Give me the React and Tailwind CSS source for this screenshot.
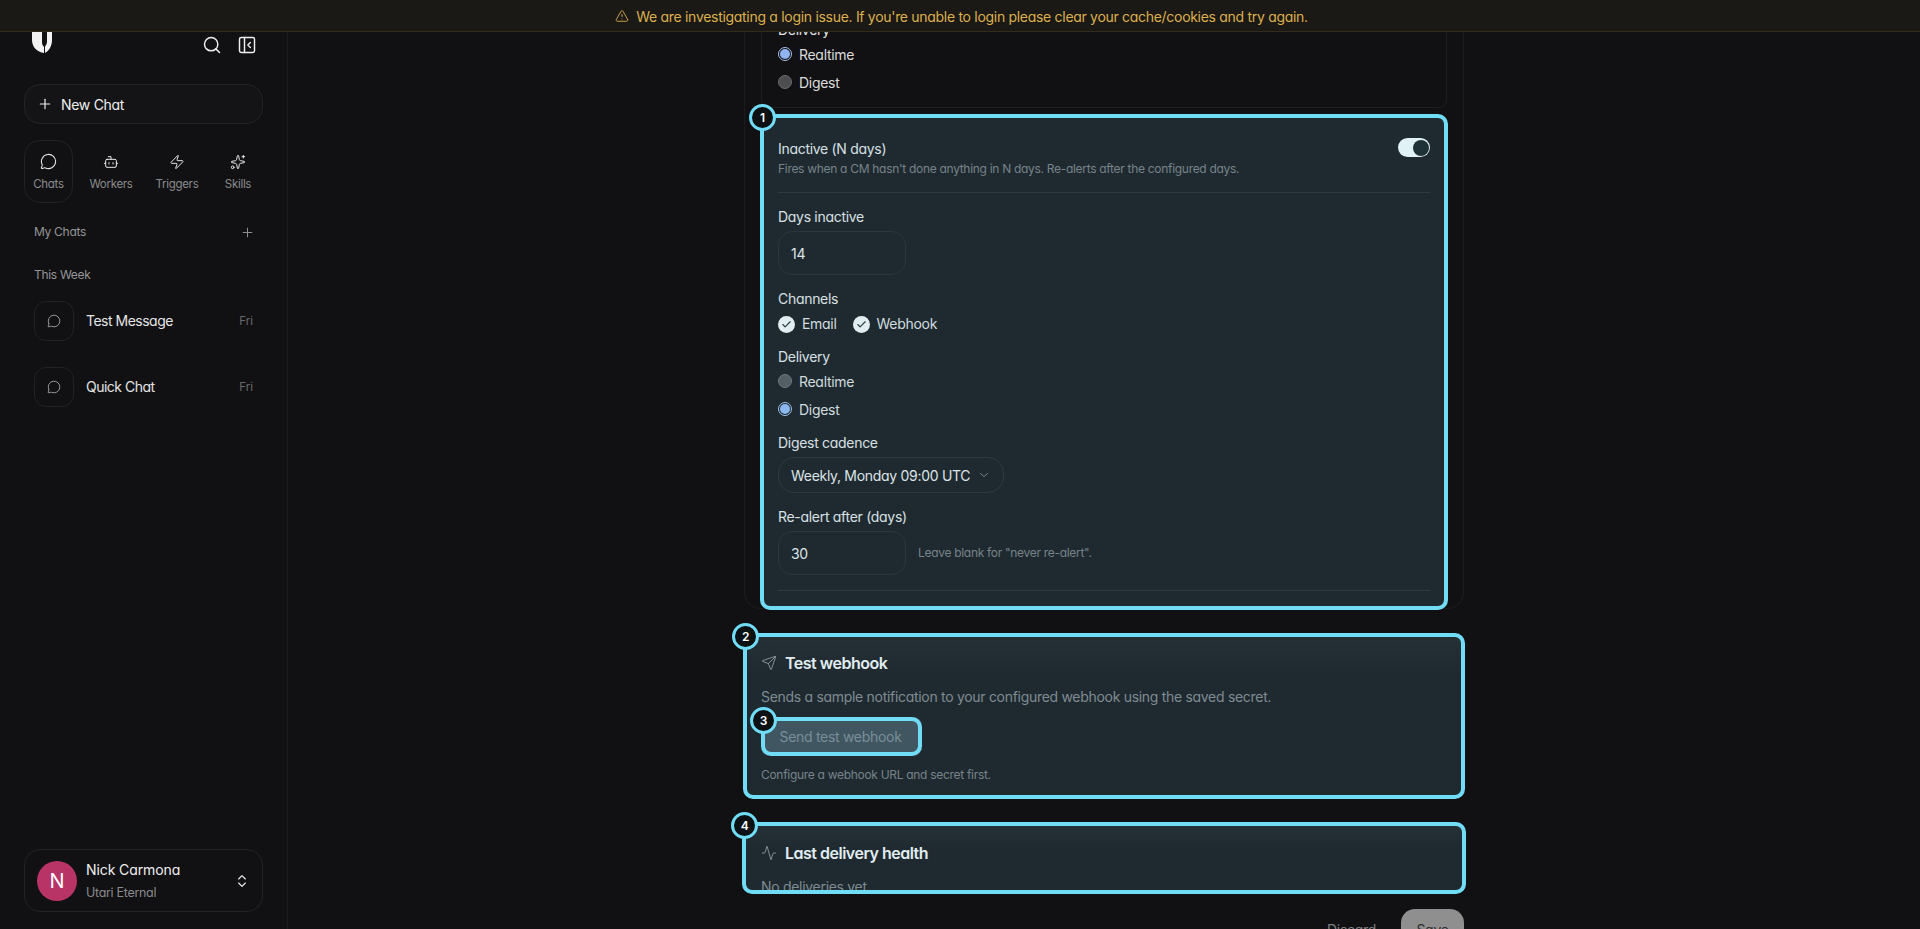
import {
  Activity,
  Bot,
  Check,
  ChevronDown,
  ChevronsUpDown,
  MessageCircle,
  PanelLeftClose,
  Plus,
  Search,
  Send,
  Sparkles,
  TriangleAlert,
  Zap,
} from "lucide-react";

function Logo() {
  return (
    <svg width="20" height="21" viewBox="0 0 20 21" fill="#f2f2f2">
      <path d="M0 0H10V10C10 12 10.5 13.5 12 15V21C5 20 0 15 0 8Z" />
      <path d="M15 0H20V8C20 14 17 19 13 21V14.5C14.5 13 15 11 15 9Z" />
    </svg>
  );
}

function Tab({ icon: Icon, label, size = 17, className }) {
  return (
    <div className={`flex h-[63px] flex-col items-center rounded-[16px] border pt-[12px] ${className}`}>
      <div className="flex h-[17px] items-center">
        <Icon size={size} strokeWidth={1.5} className="text-[#e6e6e6]" />
      </div>
      <span className="mt-[6px] text-[11.5px] leading-[16px] text-[#8b8b8d]">{label}</span>
    </div>
  );
}

function ChatRow({ title }) {
  return (
    <div className="flex h-[40px] items-center pl-[34px] pr-[34px]">
      <div className="flex h-[40px] w-[40px] items-center justify-center rounded-[12px] border border-[#222225]">
        <MessageCircle size={14} strokeWidth={1.5} className="text-[#a8a8a8]" />
      </div>
      <span className="ml-[12px] flex-1 text-[14px] leading-[20px] tracking-[-0.5px] text-[#e4e4e4]">{title}</span>
      <span className="text-[11.5px] leading-[16px] tracking-normal text-[#6a6a6c]">Fri</span>
    </div>
  );
}

function Sidebar() {
  return (
    <aside className="flex w-[288px] shrink-0 flex-col border-r border-[#1b1b1e] bg-[#111113]">
      <div className="flex h-[52px] items-start justify-between overflow-hidden pl-[32px] pr-[30px]">
        <Logo />
        <div className="mt-[3px] flex items-center gap-[15px]">
          <Search size={20} strokeWidth={1.75} className="text-[#efefef]" />
          <PanelLeftClose size={20} strokeWidth={1.75} className="text-[#efefef]" />
        </div>
      </div>
      <div className="mx-[24px] flex h-[40px] items-center rounded-[16px] border border-[#242427] bg-[#141416] pl-[12px]">
        <Plus size={16} strokeWidth={1.75} className="text-[#eeeeee]" />
        <span className="ml-[8px] pt-[1px] text-[14px] leading-[20px] text-[#eeeeee]">New Chat</span>
      </div>
      <div className="ml-[24px] mt-[16px] flex">
        <Tab icon={MessageCircle} label="Chats" className="w-[49px] border-[#222225]" />
        <Tab icon={Bot} size={16} label="Workers" className="ml-[7px] w-[62px] border-transparent" />
        <Tab icon={Zap} size={16} label="Triggers" className="ml-[4px] w-[62px] border-transparent" />
        <Tab icon={Sparkles} size={16} label="Skills" className="ml-[4px] w-[52px] border-transparent" />
      </div>
      <div className="mt-[21px] flex h-[16px] items-center justify-between pl-[34px] pr-[32px]">
        <span className="text-[12px] leading-[16px] text-[#959597]">My Chats</span>
        <Plus size={15} strokeWidth={1.5} className="text-[#959597]" />
      </div>
      <div className="mt-[27px] pl-[34px] text-[12px] leading-[16px] text-[#959597]">This Week</div>
      <div className="mt-[18px] flex flex-col gap-[26px]">
        <ChatRow title="Test Message" />
        <ChatRow title="Quick Chat" />
      </div>
      <div className="mx-[24px] mb-[17px] mt-auto flex h-[63px] items-center rounded-[16px] border border-[#232326] pl-[12px] pr-[12px]">
        <div className="flex h-[40px] w-[40px] items-center justify-center rounded-full bg-[#b83366] text-[20px] text-white">N</div>
        <div className="ml-[9px] flex-1">
          <div className="text-[14px] leading-[20px] tracking-[-0.1px] text-[#f0f0f0]">Nick Carmona</div>
          <div className="mt-[5px] text-[12.5px] leading-[16px] text-[#8a8a8c]">Utari Eternal</div>
        </div>
        <ChevronsUpDown size={16} strokeWidth={1.75} className="text-[#eeeeee]" />
      </div>
    </aside>
  );
}

function Marker({ n, inset = "-inset-[2px]" }) {
  return (
    <div className={`pointer-events-none absolute ${inset} z-10 rounded-[10px] border-4 border-[#70dcf6] bg-[#78dcf5]/[0.13]`}>
      <div className="absolute -left-[15px] -top-[14px] flex h-[27px] w-[27px] items-center justify-center rounded-full border-[3px] border-[#70dcf6] bg-[#0c1114] text-[12px] font-semibold text-white">
        {n}
      </div>
    </div>
  );
}

function Label({ children, className = "" }) {
  return <div className={`text-[14px] leading-[20px] text-[#e2e2e2] ${className}`}>{children}</div>;
}

function Radio({ on, label, className = "" }) {
  return (
    <div className={`flex h-[20px] items-center ${className}`}>
      {on ? (
        <span className="-mt-[2px] flex h-[14px] w-[14px] items-center justify-center rounded-full border-[1.5px] border-[#a8c0ea] bg-[#111113]">
          <span className="h-[10px] w-[10px] rounded-full bg-[#8fb4f0]" />
        </span>
      ) : (
        <span className="-mt-[2px] h-[14px] w-[14px] rounded-full border border-[#6b6b6b] bg-[#4d4d4f]" />
      )}
      <span className="ml-[7px] text-[14px] leading-[20px] text-[#dcdcdc]">{label}</span>
    </div>
  );
}

function Channel({ label }) {
  return (
    <div className="flex items-center">
      <span className="flex h-[17px] w-[17px] items-center justify-center rounded-full bg-[#f1f1f1]">
        <Check size={11} strokeWidth={2.5} className="text-[#1b2326]" />
      </span>
      <span className="ml-[7px] text-[14px] leading-[20px] text-[#dedede]">{label}</span>
    </div>
  );
}

function NumberInput({ value }) {
  return (
    <div className="flex h-[44px] w-[128px] items-center rounded-[14px] border border-[#1f1f22] bg-[#111113] pl-[12px] text-[14px] text-[#e8e8e8]">
      {value}
    </div>
  );
}

function InactiveCard() {
  return (
    <div className="relative mt-[8px] rounded-[8px] border border-[#1f1f22] px-[16px] pb-[16px] pt-[22px]">
      <Marker n={1} inset="-inset-x-[2px] -top-[3px] -bottom-[3px]" />
      <div className="flex items-start justify-between border-b border-[#232326] pb-[15px]">
        <div>
          <Label>Inactive (N days)</Label>
          <div className="mt-[2px] text-[12px] leading-[16px] text-[#77777a]">
            Fires when a CM hasn't done anything in N days. Re-alerts after the configured days.
          </div>
        </div>
        <div className="-mt-[1px] flex h-[19px] w-[32px] items-center justify-end rounded-full bg-[#f0f6f6] pr-[1px]">
          <span className="h-[16px] w-[16px] rounded-full bg-[#121a1c]" />
        </div>
      </div>
      <Label className="mt-[14px]">Days inactive</Label>
      <div className="mt-[4px]"><NumberInput value="14" /></div>
      <Label className="mt-[14px]">Channels</Label>
      <div className="mt-[5px] flex gap-[16px]">
        <Channel label="Email" />
        <Channel label="Webhook" />
      </div>
      <Label className="mt-[13px]">Delivery</Label>
      <Radio label="Realtime" className="mt-[5px]" />
      <Radio on label="Digest" className="mt-[8px]" />
      <Label className="mt-[13px]">Digest cadence</Label>
      <div className="mt-[4px] flex h-[36px] w-[226px] items-center rounded-[16px] border border-[#232326] bg-[#111113] pl-[12px] text-[14px] text-[#e6e6e6]">
        Weekly, Monday 09:00 UTC
        <ChevronDown size={14} strokeWidth={1.5} className="ml-[7px] text-[#8a8a8c]" />
      </div>
      <Label className="mt-[14px]">Re-alert after (days)</Label>
      <div className="mt-[4px] flex items-center">
        <NumberInput value="30" />
        <span className="ml-[12px] text-[12px] leading-[16px] text-[#77777a]">Leave blank for "never re-alert".</span>
      </div>
      <div className="mt-[15px] h-px bg-[#232326]" />
    </div>
  );
}

function Settings() {
  return (
    <div className="flex min-w-0 flex-1 flex-col bg-[#111113]">
      <div className="h-[865px] shrink-0 overflow-hidden">
        <div className="mx-auto -mt-[40px] w-[720px]">
          <div className="rounded-[16px] border border-[#1c1c1f] px-[16px] pt-[16px]">
            <div className="rounded-[8px] border border-[#1f1f22] px-[16px] pb-[14px] pt-[10px]">
              <Label>Delivery</Label>
              <Radio on label="Realtime" className="mt-[5px]" />
              <Radio label="Digest" className="mt-[8px]" />
            </div>
            <InactiveCard />
          </div>

          <div className="relative mt-[25px] rounded-[8px] border border-[#1f1f22] bg-gradient-to-b from-white/[0.03] to-transparent to-[25%] px-[16px] pb-[13px] pt-[16px]">
            <Marker n={2} inset="-inset-x-[2px] -top-[2px] -bottom-[3px]" />
            <div className="flex h-[24px] items-center">
              <Send size={16} strokeWidth={1.25} className="text-[#9a9a9c]" />
              <span className="ml-[8px] text-[16px] font-semibold leading-[24px] tracking-[-0.5px] text-[#f0f0f0]">Test webhook</span>
            </div>
            <div className="mt-[12px] text-[14px] leading-[20px] text-[#808083]">
              Sends a sample notification to your configured webhook using the saved secret.
            </div>
            <div className="relative mt-[10px] w-[161px]">
              <Marker n={3} inset="inset-0" />
              <div className="flex h-[39px] items-center justify-center rounded-[8px] bg-[#2e2e32] pr-[2px] text-[14px] text-[#78787b]">
                Send test webhook
              </div>
            </div>
            <div className="mt-[11px] text-[12px] leading-[16px] text-[#77777a]">Configure a webhook URL and secret first.</div>
          </div>

          <div className="relative mt-[27px]">
            <Marker n={4} />
            <div className="h-[68px] overflow-hidden rounded-[8px] border border-[#1f1f22] bg-gradient-to-b from-white/[0.03] to-transparent to-[40%] px-[16px] pt-[16px]">
              <div className="flex h-[24px] items-center">
                <Activity size={16} strokeWidth={1.25} className="text-[#9a9a9c]" />
                <span className="ml-[8px] text-[16px] font-semibold leading-[24px] tracking-[-0.5px] text-[#f0f0f0]">Last delivery health</span>
              </div>
              <div className="mt-[12px] text-[14px] leading-[20px] text-[#808083]">No deliveries yet.</div>
            </div>
          </div>
        </div>
      </div>
      <div className="mx-auto flex w-[720px] justify-end pt-[12px]">
        <div className="mr-[25px] flex h-[40px] items-center text-[14px] text-[#7f7f82]">Discard</div>
        <div className="flex h-[40px] w-[63px] items-center justify-center rounded-[14px] bg-[#8f8f8f] text-[14px] text-[#2e2e2e]">Save</div>
      </div>
    </div>
  );
}

export default function App() {
  return (
    <div className="flex h-screen flex-col overflow-hidden bg-[#111113] font-['Inter',sans-serif] tracking-[-0.3px] [font-feature-settings:'cv11']">
      <div className="flex h-[32px] shrink-0 items-center justify-center border-b border-[#332c1e] bg-[#1b1915] pl-[3px] pt-[1px] text-[14px] text-[#dcb04e]">
        <TriangleAlert size={14} strokeWidth={1.5} className="mr-[7px]" />
        We are investigating a login issue. If you're unable to login please clear your cache/cookies and try again.
      </div>
      <div className="flex min-h-0 flex-1">
        <Sidebar />
        <Settings />
      </div>
    </div>
  );
}
